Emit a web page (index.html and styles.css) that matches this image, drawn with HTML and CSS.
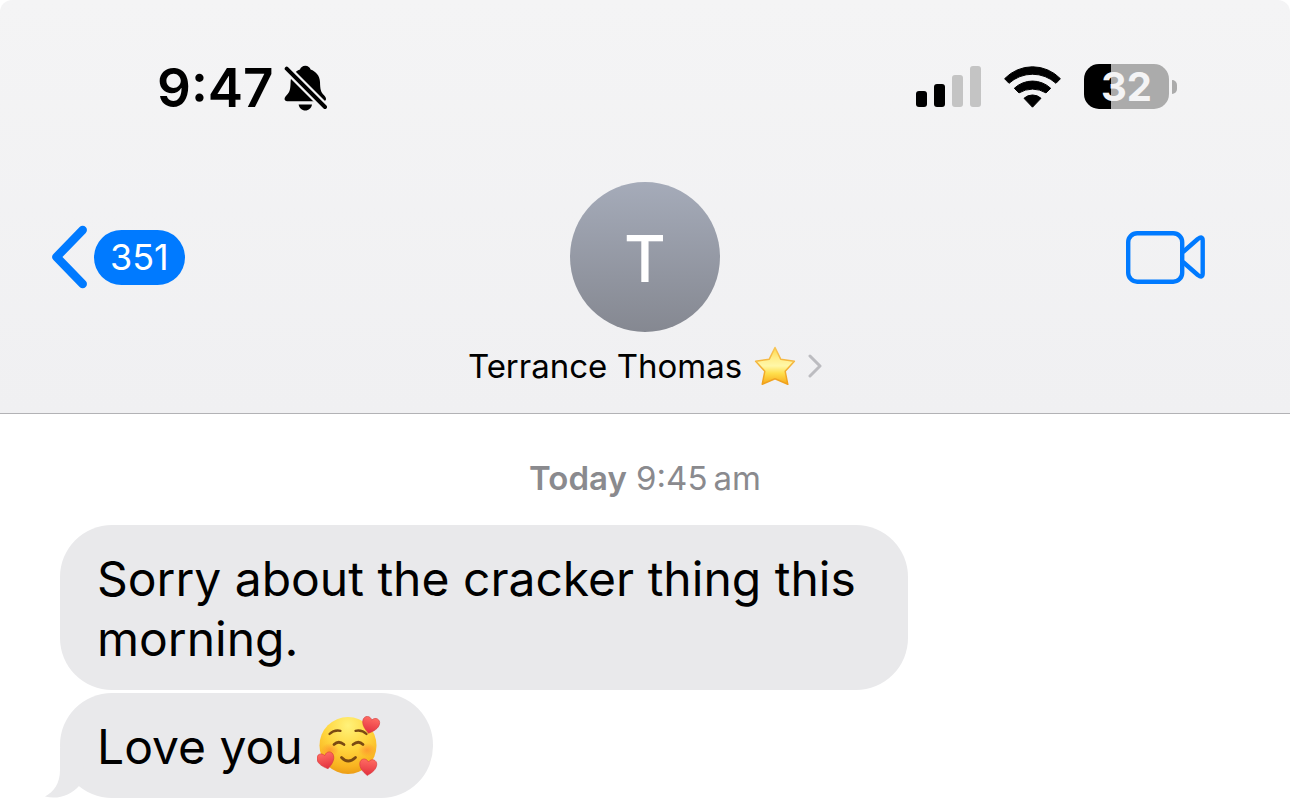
FILE: index.html
```
<!DOCTYPE html>
<html lang="en">
<head>
  <meta charset="UTF-8">
  <meta name="viewport" content="width=device-width, initial-scale=1.0">
  <title>Terrance Thomas - Messages</title>
  <link rel="stylesheet" href="styles.css">
</head>
<body>

<header class="header">
  <div class="status-bar">
    <div class="status-left">
      <span class="time">9:47</span>
      <svg class="bell" viewBox="0 0 44 46" aria-label="Silent mode">
        <mask id="bell-cut">
          <rect width="44" height="46" fill="#fff"/>
          <path d="M-2-1 46 47" stroke="#000" stroke-width="8.5"/>
        </mask>
        <g mask="url(#bell-cut)">
          <path d="M21.3.8C18.500.8 16.600 2.600 16 4.600 10.600 6.600 6.800 11 6.600 17 6.400 24 6 27 2.600 30.300 1.200 31.800.6 32.800.6 34c0 1.400 1 2.200 2.500 2.200H39.400c1.600 0 2.600-.8 2.600-2.200 0-1.200-.6-2.200-2-3.700C36.600 27 36.200 24 36 17 35.800 11 32 6.600 26.600 4.600 26 2.600 24.100.8 21.300.8z"/>
        </g>
        <path d="M14.600 39.400H28c-.6 3.600-3.300 6-6.700 6s-6.100-2.400-6.700-6z"/>
        <path d="M2.700 3.700 41 42" stroke="#000" stroke-width="4" stroke-linecap="round"/>
      </svg>
    </div>
    <div class="status-right">
      <svg class="signal" viewBox="0 0 65 41" aria-label="Signal">
        <rect x="0" y="25" width="11" height="16" rx="3"/>
        <rect x="18" y="18" width="11" height="23" rx="3"/>
        <rect x="36" y="9" width="11" height="32" rx="3" fill="#c4c4c4"/>
        <rect x="54" y="0" width="11" height="41" rx="3" fill="#c4c4c4"/>
      </svg>
      <svg class="wifi" viewBox="0 0 57 42" aria-label="Wi-Fi">
        <path d="M.6 12.700A38.600 38.600 0 0 1 56.400 12.700L52 17.300A35 35 0 0 0 5 17.300Z"/>
        <path d="M10.300 22.300A26.500 26.500 0 0 1 46.700 22.300L42 26.900A26 26 0 0 0 15 26.900Z"/>
        <path d="M20 32.300A12.500 12.500 0 0 1 37 32.300L28.500 41.200Z"/>
      </svg>
      <div class="battery">
        <span class="battery-level">32</span>
        <span class="battery-cap"></span>
      </div>
    </div>
  </div>

  <nav class="nav">
    <div class="nav-side">
      <a class="back" href="#" aria-label="Back, 351 unread">
        <svg class="back-arrow" viewBox="0 0 36 64">
          <path d="M31.700 5 5.500 32l26.200 27"/>
        </svg>
        <span class="badge">351</span>
      </a>
    </div>
    <a class="contact" href="#">
      <span class="avatar">T</span>
      <span class="contact-name">
        <span>Terrance Thomas</span>
        <svg class="star" viewBox="0 0 42 40">
          <defs>
            <linearGradient id="star-fill" x1="0" y1="0" x2="0" y2="1">
              <stop offset="0" stop-color="#ffd84a"/>
              <stop offset=".3" stop-color="#ffee8c"/>
              <stop offset=".5" stop-color="#fff7a8"/>
              <stop offset=".7" stop-color="#ffdf4c"/>
              <stop offset="1" stop-color="#f7a91a"/>
            </linearGradient>
            <linearGradient id="star-edge" x1="0" y1="0" x2="0" y2="1">
              <stop offset="0" stop-color="#f7c455"/>
              <stop offset="1" stop-color="#f0a01a"/>
            </linearGradient>
          </defs>
          <path d="M21 1.500 26.700 13.200 40.400 15.200 31.200 25.300 33.800 38.300 21 32.800 8.200 38.300 10.800 25.300 1.600 15.200 15.300 13.200Z" fill="url(#star-fill)" stroke="url(#star-edge)" stroke-width="1.500" stroke-linejoin="round"/>
        </svg>
        <svg class="chevron" viewBox="0 0 14 24">
          <path d="M2 2 12 12 2 22"/>
        </svg>
      </span>
    </a>
    <div class="nav-side nav-right">
      <button class="video" type="button" aria-label="FaceTime">
        <svg viewBox="0 0 81 55">
          <rect x="3.200" y="3.200" width="54" height="48.500" rx="9"/>
          <path d="M58 22 72.800 9Q77.700 5.500 77.700 10.500V43.500Q77.700 48.500 72.800 45L58 32"/>
        </svg>
      </button>
    </div>
  </nav>
</header>

<main class="chat">
  <p class="timestamp"><b>Today</b> 9:45&thinsp;am</p>
  <div class="bubble">Sorry about the cracker thing this morning.</div>
  <div class="bubble bubble-last">
    <span>Love you</span>
    <svg class="emoji" viewBox="0 0 64 62" aria-label="Smiling face with hearts">
      <defs>
        <radialGradient id="face" cx=".5" cy=".15" r=".85">
          <stop offset="0" stop-color="#fff27a"/>
          <stop offset=".5" stop-color="#ffd43c"/>
          <stop offset=".85" stop-color="#f9b320"/>
          <stop offset="1" stop-color="#ec9d16"/>
        </radialGradient>
        <radialGradient id="blush">
          <stop offset="0" stop-color="#ff7a2e" stop-opacity=".55"/>
          <stop offset="1" stop-color="#ff7a2e" stop-opacity="0"/>
        </radialGradient>
        <linearGradient id="heart-fill" x1="0" y1="0" x2="0" y2="1">
          <stop offset="0" stop-color="#ff6b62"/>
          <stop offset="1" stop-color="#e2303f"/>
        </linearGradient>
        <path id="heart" d="M0 8.500C-5 5-8.500 1.500-8.500-3-8.500-8-2.500-9.500 0-5 2.500-9.500 8.500-8 8.500-3 8.500 1.500 5 5 0 8.500Z" fill="url(#heart-fill)" stroke="#d63a3c" stroke-width=".6"/>
      </defs>
      <circle cx="31" cy="29.500" r="28.500" fill="url(#face)"/>
      <ellipse cx="13" cy="34" rx="9" ry="7" fill="url(#blush)"/>
      <ellipse cx="50" cy="34" rx="9" ry="7" fill="url(#blush)"/>
      <g fill="none" stroke="#7b4a12" stroke-linecap="round">
        <path d="M12.500 18Q17 13.500 23.500 14.800M38.500 14.800Q45 13.500 49.500 18" stroke-width="2.300"/>
        <path d="M17 28.500Q21.500 24 27 28.500M36 28.500Q41.500 24 46 28.500" stroke-width="2.800"/>
        <path d="M24.500 41.500Q31 48.500 38.500 41.500" stroke-width="2.800"/>
      </g>
      <use href="#heart" transform="translate(53.500 9) rotate(14)"/>
      <use href="#heart" transform="translate(9 44.500) rotate(-14)"/>
      <use href="#heart" transform="translate(51 51) rotate(5)"/>
    </svg>
    <svg class="tail" viewBox="0 0 44 50">
      <path d="M16 0V22C16 35 10 44 1 48.500 14 52 27 47 35 38L44 0Z"/>
    </svg>
  </div>
</main>

</body>
</html>
```
FILE: styles.css
```
* {
  box-sizing: border-box;
}
body {
  margin: 0;
  background: #fff;
  color: #000;
  font-family: Inter, "Liberation Sans", sans-serif;
}
svg {
  display: block;
  flex: none;
}
a {
  color: inherit;
  text-decoration: none;
}

/* header */
.header {
  padding: 60px 0 25px;
  background: linear-gradient(#f4f4f5, #f0f0f2);
  border-bottom: 1px solid #b2b2b5;
  border-radius: 12px 12px 0 0;
}
.status-bar {
  display: flex;
  justify-content: space-between;
  align-items: flex-start;
  height: 54px;
  padding: 0 113px 0 157px;
}
.status-left {
  display: flex;
  align-items: center;
  gap: 10px;
}
.time {
  font-size: 53px;
  font-weight: 600;
  line-height: 56px;
}
.bell {
  width: 44px;
  height: 46px;
}
.status-right {
  display: flex;
  align-items: center;
  gap: 23px;
  padding-top: 4px;
}
.signal {
  width: 65px;
  height: 41px;
}
.wifi {
  width: 57px;
  height: 42px;
  stroke: #000;
  stroke-width: 1;
  stroke-linejoin: round;
}
.battery {
  display: flex;
  align-items: center;
  gap: 3px;
}
.battery-level {
  width: 85px;
  height: 45px;
  border-radius: 15px;
  background: linear-gradient(to right, #000 32%, #ababab 32%);
  color: #f4f4f5;
  font-size: 40px;
  font-weight: 700;
  line-height: 45px;
  text-align: center;
}
.battery-cap {
  width: 5px;
  height: 14px;
  border-radius: 0 5px 5px 0;
  background: #ababab;
}

.nav {
  display: grid;
  grid-template-columns: 1fr auto 1fr;
  padding-top: 68px;
}
.nav-side {
  display: flex;
  align-items: center;
  height: 150px;
  padding-left: 51px;
}
.nav-right {
  justify-content: flex-end;
  padding: 0 84px 0 0;
}
.back {
  display: flex;
  align-items: center;
  gap: 7px;
}
.back-arrow {
  width: 36px;
  height: 64px;
  fill: none;
  stroke: #007aff;
  stroke-width: 8.5;
  stroke-linecap: round;
  stroke-linejoin: round;
}
.badge {
  padding: 0 16px;
  border-radius: 28px;
  background: #007aff;
  color: #fff;
  font-size: 36px;
  line-height: 55px;
}
.contact {
  display: flex;
  flex-direction: column;
  align-items: center;
  gap: 12px;
}
.avatar {
  width: 150px;
  height: 150px;
  border-radius: 50%;
  background: linear-gradient(#a5abb9, #858891);
  color: #fff;
  font-size: 64px;
  font-weight: 500;
  line-height: 154px;
  text-align: center;
}
.contact-name {
  display: flex;
  align-items: center;
  gap: 12px;
  font-size: 33px;
  line-height: 44px;
}
.star {
  width: 42px;
  height: 40px;
}
.chevron {
  width: 14px;
  height: 24px;
  fill: none;
  stroke: #bcbcc0;
  stroke-width: 3;
  stroke-linecap: round;
  stroke-linejoin: round;
}
.video {
  padding: 0;
  border: none;
  background: none;
  cursor: pointer;
}
.video svg {
  width: 81px;
  height: 55px;
  fill: none;
  stroke: #007aff;
  stroke-width: 4.4;
  stroke-linejoin: round;
}

/* messages */
.chat {
  display: flex;
  flex-direction: column;
  align-items: flex-start;
  gap: 3px;
  padding: 44px 60px 0;
}
.timestamp {
  align-self: center;
  margin: 0 0 24px;
  color: #8a8a8e;
  font-size: 33px;
  line-height: 40px;
}
.timestamp b {
  font-weight: 600;
}
.bubble {
  max-width: 848px;
  padding: 24px 37px 21px;
  border-radius: 52px;
  background: #e9e9eb;
  font-size: 48px;
  line-height: 60px;
}
.bubble-last {
  position: relative;
  display: flex;
  align-items: center;
  gap: 14px;
  padding-right: 52px;
}
.emoji {
  width: 64px;
  height: 62px;
  margin: -1px 0;
}
.tail {
  position: absolute;
  left: -16px;
  bottom: 0;
  width: 44px;
  height: 50px;
  fill: #e9e9eb;
}
```
